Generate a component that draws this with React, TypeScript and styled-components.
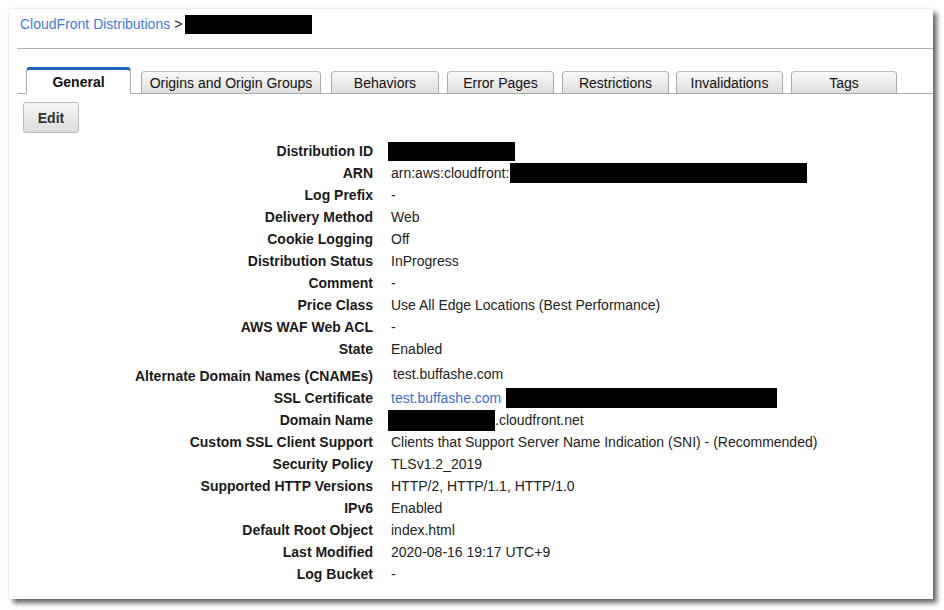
import React from "react"
import styled, { createGlobalStyle } from "styled-components"

const GlobalStyle = createGlobalStyle`
    html, body {
        margin: 0;
        padding: 0;
        background: #ffffff;
    }
    body {
        font-family: "Liberation Sans", Arial, sans-serif;
        font-size: 14px;
        color: #222;
    }
`

const Page = styled.div`
    padding: 9px 0 0 9px;
    width: 944px;
    height: 610px;
    box-sizing: border-box;
`
const Panel = styled.div`
    width: 924px;
    height: 590px;
    background: #fff;
    box-shadow: 0 0 2px rgba(0, 0, 0, 0.12), 4px 4px 5px rgba(0, 0, 0, 0.6);
    display: flex;
    flex-direction: column;
`
const Breadcrumb = styled.div`
    display: flex;
    align-items: flex-start;
    height: 40px;
    box-sizing: border-box;
    margin-left: 8px;
    padding: 7px 0 0 3px;
    border-bottom: 1px solid #b4b4b4;
`
const Crumb = styled.span`
    color: #3f7bd8;
    font-size: 14px;
`
const Sep = styled.span`
    margin: 0 3px 0 4px;
    font-size: 14px;
`
const Redact = styled.span<{ $w: number; $h?: number }>`
    display: inline-block;
    width: ${p => p.$w}px;
    height: ${p => p.$h ?? 20}px;
    background: #000;
    vertical-align: middle;
`
const TabBar = styled.div`
    display: flex;
    align-items: flex-end;
    margin: 17px 0 0 8px;
    padding-left: 9px;
    height: 27px;
    border-bottom: 1px solid #aaa;
`
const Tab = styled.div<{ $w: number; $gap: number; $active?: boolean }>`
    width: ${p => p.$w}px;
    margin-left: ${p => p.$gap}px;
    box-sizing: border-box;
    height: ${p => (p.$active ? 27 : 23)}px;
    margin-bottom: -1px;
    display: flex;
    align-items: center;
    justify-content: center;
    font-size: 14px;
    font-weight: ${p => (p.$active ? "bold" : "normal")};
    color: #111;
    border: 1px solid #aaa;
    border-bottom: ${p => (p.$active ? "1px solid #fff" : "1px solid #aaa")};
    border-top: ${p => (p.$active ? "3px solid #1e63c0" : "1px solid #b8b8b8")};
    border-radius: 4px 4px 0 0;
    background: ${p => (p.$active ? "#fff" : "linear-gradient(#f9f9f9, #dedede)")};
`
const Toolbar = styled.div`
    padding: 8px 0 0 14px;
`
const Button = styled.button`
    width: 56px;
    height: 31px;
    font-family: "Liberation Sans", Arial, sans-serif;
    font-size: 14px;
    font-weight: bold;
    color: #333;
    border: 1px solid #b9b9b9;
    border-radius: 3px;
    background: linear-gradient(#f7f7f7, #dcdcdc);
    padding: 0;
`
const Details = styled.div`
    display: grid;
    grid-template-columns: 364px 1fr;
    column-gap: 18px;
    margin-top: 7px;
`
const Label = styled.div<{ $h?: number }>`
    height: ${p => p.$h ?? 22}px;
    display: flex;
    align-items: center;
    justify-content: flex-end;
    font-weight: bold;
    color: #1a1a1a;
    white-space: nowrap;
    padding-top: ${p => (p.$h ? 5 : 0)}px;
    box-sizing: border-box;
`
const Value = styled.div<{ $h?: number; $shift?: number }>`
    height: ${p => p.$h ?? 22}px;
    display: flex;
    align-items: center;
    color: #222;
    white-space: nowrap;
    padding-left: ${p => p.$shift ?? 0}px;
    box-sizing: border-box;
`
const Link = styled.span`
    color: #3b6fcf;
    margin-right: 5px;
`

const tabs = [
    { name: "General", w: 105, gap: 0, active: true },
    { name: "Origins and Origin Groups", w: 180, gap: 10 },
    { name: "Behaviors", w: 108, gap: 10 },
    { name: "Error Pages", w: 107, gap: 8 },
    { name: "Restrictions", w: 107, gap: 8 },
    { name: "Invalidations", w: 107, gap: 7 },
    { name: "Tags", w: 106, gap: 8 },
]

type Row = { label: string; value: React.ReactNode; h?: number; shift?: number }

const rows: Row[] = [
    { label: "Distribution ID", value: <Redact $w={127} $h={19} style={{ marginLeft: -3 }} /> },
    { label: "ARN", value: <>arn:aws:cloudfront:<Redact $w={297} style={{ marginLeft: 1 }} /></> },
    { label: "Log Prefix", value: "-" },
    { label: "Delivery Method", value: "Web" },
    { label: "Cookie Logging", value: "Off" },
    { label: "Distribution Status", value: "InProgress" },
    { label: "Comment", value: "-" },
    { label: "Price Class", value: "Use All Edge Locations (Best Performance)" },
    { label: "AWS WAF Web ACL", value: "-" },
    { label: "State", value: "Enabled" },
    { label: "Alternate Domain Names (CNAMEs)", value: "test.buffashe.com", h: 27, shift: 2 },
    { label: "SSL Certificate", value: <><Link>test.buffashe.com</Link><Redact $w={271} /></> },
    { label: "Domain Name", value: <><Redact $w={107} $h={21} style={{ marginLeft: -3 }} />.cloudfront.net</> },
    { label: "Custom SSL Client Support", value: "Clients that Support Server Name Indication (SNI) - (Recommended)" },
    { label: "Security Policy", value: "TLSv1.2_2019" },
    { label: "Supported HTTP Versions", value: "HTTP/2, HTTP/1.1, HTTP/1.0" },
    { label: "IPv6", value: "Enabled" },
    { label: "Default Root Object", value: "index.html" },
    { label: "Last Modified", value: "2020-08-16 19:17 UTC+9" },
    { label: "Log Bucket", value: "-" },
]

const App = () => {
    return (
        <Page>
            <GlobalStyle />
            <Panel>
                <Breadcrumb>
                    <Crumb>CloudFront Distributions</Crumb>
                    <Sep>&gt;</Sep>
                    <Redact $w={127} $h={19} style={{ marginTop: -1 }} />
                </Breadcrumb>
                <TabBar>
                    {tabs.map(t => (
                        <Tab key={t.name} $w={t.w} $gap={t.gap} $active={t.active}>{t.name}</Tab>
                    ))}
                </TabBar>
                <Toolbar>
                    <Button>Edit</Button>
                </Toolbar>
                <Details>
                    {rows.map(r => (
                        <React.Fragment key={r.label}>
                            <Label $h={r.h}>{r.label}</Label>
                            <Value $h={r.h} $shift={r.shift}>{r.value}</Value>
                        </React.Fragment>
                    ))}
                </Details>
            </Panel>
        </Page>
    )
}

export default App
